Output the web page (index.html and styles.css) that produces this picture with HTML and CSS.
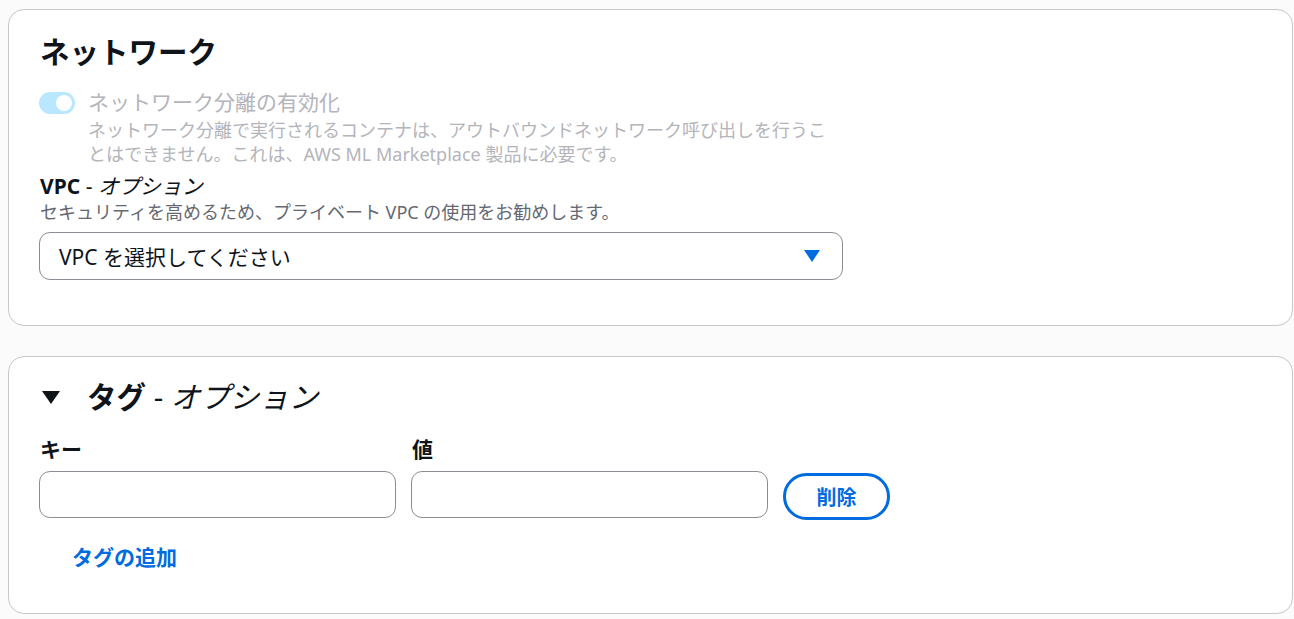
FILE: index.html
```html
<!DOCTYPE html>
<html lang="ja">
<head>
    <meta charset="UTF-8">
    <meta name="viewport" content="width=device-width, initial-scale=1.0">
    <title>ネットワーク</title>
    <link rel="stylesheet" href="styles.css">
</head>
<body>
    <div class="page">
        <!-- Network -->
        <section class="card network">
            <h2 class="card-title">ネットワーク</h2>

            <div class="toggle-field">
                <span class="toggle"><span class="knob"></span></span>
                <div class="toggle-text">
                    <div class="toggle-label">ネットワーク分離の有効化</div>
                    <div class="toggle-desc">ネットワーク分離で実行されるコンテナは、アウトバウンドネットワーク呼び出しを行うことはできません。これは、AWS ML Marketplace 製品に必要です。</div>
                </div>
            </div>

            <div class="field">
                <div class="field-label"><b>VPC</b> - <i>オプション</i></div>
                <div class="field-desc">セキュリティを高めるため、プライベート VPC の使用をお勧めします。</div>
                <div class="select">
                    <span>VPC を選択してください</span>
                    <svg class="select-caret" width="16" height="12" viewBox="0 0 16 12"><polygon points="0,0 16,0 8,12" fill="#006ce0"/></svg>
                </div>
            </div>
        </section>

        <!-- Tags -->
        <section class="card tags">
            <h2 class="card-title tags-title">
                <svg class="expand-caret" width="18" height="13" viewBox="0 0 18 13"><polygon points="0,0 18,0 9,13" fill="#0f141a"/></svg>
                <span><b>タグ</b> - <i>オプション</i></span>
            </h2>

            <div class="tag-row">
                <div class="tag-col">
                    <div class="field-label"><b>キー</b></div>
                    <div class="input"></div>
                </div>
                <div class="tag-col">
                    <div class="field-label"><b>値</b></div>
                    <div class="input"></div>
                </div>
                <button type="button" class="btn-remove">削除</button>
            </div>

            <a class="add-tag">タグの追加</a>
        </section>
    </div>
</body>
</html>
```

FILE: styles.css
```css
body {
    margin: 0;
    padding: 0;
    background: #fbfbfb;
    font-family: "Noto Sans", "Noto Sans CJK JP", sans-serif;
    color: #0f141a;
}

.page {
    padding: 9px 1px 0 8px;
    display: flex;
    flex-direction: column;
    gap: 30px;
}

.card {
    background: #fff;
    border: 1px solid #c6c6cd;
    border-radius: 16px;
    padding: 24px 30px 45px 30px;
}

.card-title {
    margin: 0;
    font-size: 29.5px;
    line-height: 36px;
    font-weight: 700;
    padding-left: 1px;
}

/* toggle */
.toggle-field {
    display: flex;
    gap: 12px;
    margin-top: 20px;
    max-width: 804px;
}

.toggle {
    flex: none;
    width: 36px;
    height: 22px;
    margin-top: 2px;
    border-radius: 11px;
    background: #b8e7ff;
    position: relative;
}

.toggle .knob {
    position: absolute;
    top: 3px;
    right: 3px;
    width: 16px;
    height: 16px;
    border-radius: 50%;
    background: #fff;
}

.toggle-text {
    padding-left: 1px;
}

.toggle-label {
    font-size: 21px;
    line-height: 24px;
    color: #b4b4bb;
}

.toggle-desc {
    margin-top: 4px;
    font-size: 18px;
    line-height: 24px;
    color: #b4b4bb;
}

/* fields */
.field {
    margin-top: 7px;
    max-width: 804px;
}

.field-label {
    font-size: 21px;
    line-height: 27px;
    padding-left: 1px;
}

.field-label b {
    font-weight: 700;
}

.field-desc {
    font-size: 18px;
    line-height: 24px;
    color: #656871;
    padding-left: 1px;
}

.select {
    margin-top: 8px;
    height: 46px;
    border: 1px solid #8c8c94;
    border-radius: 11px;
    display: flex;
    align-items: center;
    justify-content: space-between;
    padding: 0 22px 0 19px;
    font-size: 21px;
}

/* tags */
.card.tags {
    padding-top: 22px;
    padding-bottom: 44px;
}

.tags-title {
    display: flex;
    align-items: center;
    gap: 27px;
    padding-left: 3px;
    font-weight: 400;
}

.tag-row {
    display: flex;
    align-items: flex-start;
    gap: 15px;
    margin-top: 21px;
}

.tag-col {
    width: 357px;
    display: flex;
    flex-direction: column;
    gap: 8px;
}

.input {
    height: 45px;
    border: 1px solid #8c8c94;
    border-radius: 11px;
    background: #fff;
}

.btn-remove {
    margin-top: 37px;
    width: 107px;
    height: 47px;
    background: #fff;
    border: 3px solid #006ce0;
    border-radius: 24px;
    color: #006ce0;
    font-family: inherit;
    font-size: 20px;
    font-weight: 700;
    cursor: pointer;
}

.add-tag {
    display: block;
    margin: 25px 0 0 33px;
    font-size: 21px;
    line-height: 24px;
    font-weight: 700;
    color: #006ce0;
    cursor: pointer;
}
```
